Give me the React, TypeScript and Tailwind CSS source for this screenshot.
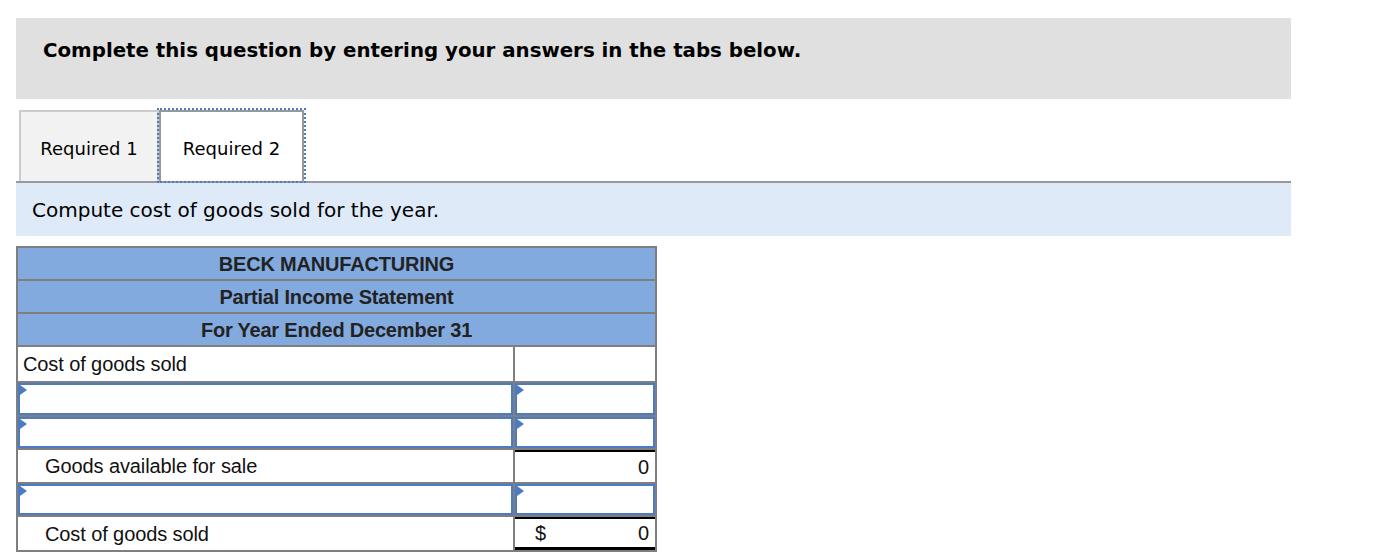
import React from 'react';

const verdana = { fontFamily: '"DejaVu Sans", Verdana, sans-serif' };
const arial = { fontFamily: '"Liberation Sans", Arial, sans-serif' };

function InputCell({ className = '' }: { className?: string }) {
    return (
        <div className={`relative h-full border-2 border-[#4b7bc4] bg-white ${className}`}>
            <span className="absolute left-0 top-0 w-0 h-0 border-y-[5px] border-y-transparent border-l-[7px] border-l-[#4b7bc4]" />
        </div>
    );
}

function HeaderRow({ text }: { text: string }) {
    return (
        <div className="h-[33px] flex items-center justify-center bg-[#83aadf] font-bold text-[20px] tracking-[-0.2px] text-[#222] border-b-2 border-[#7f7f7f]">
            {text}
        </div>
    );
}

export default function App() {
    return (
        <div className="w-[1378px] h-[558px] bg-white text-black overflow-hidden">
            <div className="ml-4 mt-[18px] w-[1275px] h-[81px] bg-[#e0e0e0] pl-[27px] pt-[20px]" style={verdana}>
                <h1 className="text-[19.8px] leading-[26px] font-bold text-black">Complete this question by entering your answers in the tabs below.</h1>
            </div>

            <div className="ml-4 mt-[11px] w-[1275px]" style={verdana}>
                <div className="flex pl-[3px] h-[71px]">
                    <div className="w-[140px] h-full bg-[#f2f2f2] border-2 border-b-0 border-[#cccccc] flex items-center justify-center pt-[3px] text-[18px]">
                        Required 1
                    </div>
                    <div className="w-[145px] h-full bg-white border-2 border-b-0 border-[#999999] outline-2 outline-dotted outline-[#4b7bc4] flex items-center justify-center pt-[3px] text-[18px]">
                        Required 2
                    </div>
                </div>
                <div className="border-t-2 border-[#999999] h-[55px] bg-[#deeaf7] flex items-center pl-4 text-[20px]">
                    Compute cost of goods sold for the year.
                </div>
            </div>

            <div className="ml-4 mt-[10px] w-[641px] border-2 border-[#7f7f7f]" style={arial}>
                <HeaderRow text="BECK MANUFACTURING" />
                <HeaderRow text="Partial Income Statement" />
                <HeaderRow text="For Year Ended December 31" />
                <div className="grid grid-cols-[497px_1fr] text-[20px] tracking-[-0.1px] text-[#111]">
                    <div className="h-[36px] flex items-center pl-[5px] border-r-2 border-b-2 border-[#7f7f7f]">Cost of goods sold</div>
                    <div className="h-[36px] border-b-2 border-[#7f7f7f]" />

                    <div className="h-[34px] border-r-2 border-b-2 border-[#7f7f7f]"><InputCell /></div>
                    <div className="h-[34px] border-b-2 border-[#7f7f7f]"><InputCell /></div>

                    <div className="h-[33px] border-r-2 border-b-2 border-[#7f7f7f]"><InputCell /></div>
                    <div className="h-[33px] border-b-2 border-[#7f7f7f]"><InputCell /></div>

                    <div className="h-[34px] flex items-center pl-[27px] border-r-2 border-b-2 border-[#7f7f7f]">Goods available for sale</div>
                    <div className="h-[34px] flex items-center justify-end pr-[6px] border-t-2 border-t-black border-b-2 border-[#7f7f7f]">0</div>

                    <div className="h-[33px] border-r-2 border-b-2 border-[#7f7f7f]"><InputCell /></div>
                    <div className="h-[33px] border-b-2 border-[#7f7f7f]"><InputCell /></div>

                    <div className="h-[33px] flex items-center pl-[27px] border-r-2 border-[#7f7f7f]">Cost of goods sold</div>
                    <div className="h-[33px] flex items-center justify-between pl-5 pr-[6px] border-t-2 border-t-black border-b-[3px] border-b-black">
                        <span>$</span>
                        <span>0</span>
                    </div>
                </div>
            </div>
        </div>
    );
}
